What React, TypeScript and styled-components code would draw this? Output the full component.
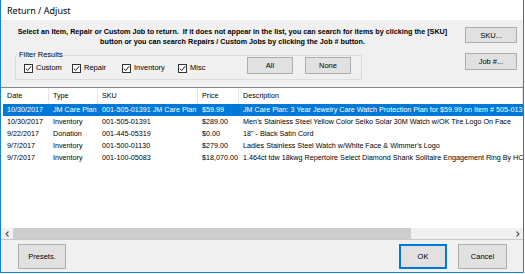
import * as React from 'react'
import styled, { createGlobalStyle } from 'styled-components'

interface IRow {
	date: string
	type: string
	sku: string
	price: string
	desc: string
	selected?: boolean
}

const ROWS: IRow[] = [
	{
		date: '10/30/2017',
		desc: 'JM Care Plan: 3 Year Jewelry Care Watch Protection Plan for $59.99 on Item # 505-01391',
		price: '$59.99',
		selected: true,
		sku: '001-505-01391 JM Care Plan',
		type: 'JM Care Plan',
	},
	{
		date: '10/30/2017',
		desc: "Men's Stainless Steel Yellow Color Seiko Solar 30M Watch w/OK Tire Logo On Face",
		price: '$289.00',
		sku: '001-505-01391',
		type: 'Inventory',
	},
	{
		date: '9/22/2017',
		desc: '18" - Black Satin Cord',
		price: '$0.00',
		sku: '001-445-05319',
		type: 'Donation',
	},
	{
		date: '9/7/2017',
		desc: "Ladies Stainless Steel Watch w/White Face & Wimmer's Logo",
		price: '$279.00',
		sku: '001-500-01130',
		type: 'Inventory',
	},
	{
		date: '9/7/2017',
		desc: '1.464ct tdw 18kwg Repertoire Select Diamond Shank Solitaire Engagement Ring By HC',
		price: '$18,070.00',
		sku: '001-100-05083',
		type: 'Inventory',
	},
]

const COLUMNS = [
	{ key: 'date', label: 'Date', width: 46 },
	{ key: 'type', label: 'Type', width: 49 },
	{ key: 'sku', label: 'SKU', width: 100 },
	{ key: 'price', label: 'Price', width: 41 },
	{ key: 'desc', label: 'Description', width: 0 },
] as const

const FILTERS = [
	{ label: 'Custom', width: 48 },
	{ label: 'Repair', width: 50 },
	{ label: 'Inventory', width: 56 },
	{ label: 'Misc', width: 69 },
]

const GlobalStyle = createGlobalStyle`
	html, body {
		margin: 0;
		padding: 0;
		background: #fff;
	}
	body {
		font-family: 'Liberation Sans', Arial, sans-serif;
		font-size: 7.2px;
		color: #000;
	}
`

const Window = styled.div`
	width: 524px;
	height: 273px;
	box-sizing: border-box;
	border: 1px solid #1883d7;
	border-top: none;
	display: flex;
	flex-direction: column;
	background: #f0f0f0;
`

const TitleBar = styled.div`
	height: 20px;
	flex: none;
	background: #fff;
	display: flex;
	align-items: center;
	padding-left: 6px;
	font-family: 'Noto Sans', 'Open Sans', sans-serif;
	font-size: 9px;
`

const TopPanel = styled.div`
	height: 67px;
	flex: none;
	display: grid;
	grid-template-columns: 463px 52px;
	column-gap: 1px;
`

const LeftPane = styled.div`
	padding-top: 7px;
`

const Instructions = styled.p`
	margin: 0;
	text-align: center;
	font-weight: bold;
	line-height: 10px;
	font-size: 7.2px;
	white-space: nowrap;
`

const Group = styled.fieldset`
	margin: 3px 0 0 14px;
	padding: 0 0 0 2px;
	width: 347px;
	height: 30px;
	box-sizing: border-box;
	border: 1px solid #dcdcdc;
`

const Legend = styled.legend`
	padding: 0 1px;
	line-height: 10px;
	font-size: 7.5px;
`

const FilterRow = styled.div`
	display: flex;
	align-items: flex-start;
	margin-top: -3px;
	padding-left: 6px;
`

const CheckItem = styled.label<{ $width: number }>`
	width: ${p => p.$width}px;
	flex: none;
	display: flex;
	align-items: center;
	gap: 3px;
	margin-top: 6px;
	line-height: 10px;
	font-size: 7.5px;
`

const Box = styled.span`
	width: 9px;
	height: 9px;
	box-sizing: border-box;
	border: 1px solid #333;
	background: #fff;
	display: flex;
	align-items: center;
	justify-content: center;
`

const Button = styled.button<{ $width: number; $height: number; $default?: boolean }>`
	width: ${p => p.$width}px;
	height: ${p => p.$height}px;
	flex: none;
	padding: 0;
	box-sizing: border-box;
	background: #e1e1e1;
	border: 1px solid ${p => (p.$default ? '#0078d7' : '#adadad')};
	box-shadow: ${p => (p.$default ? 'inset 0 0 0 1px #0078d7' : 'none')};
	font-family: 'Liberation Sans', Arial, sans-serif;
	font-size: 7.5px;
	color: #000;
`

const ButtonPair = styled.div`
	display: flex;
	gap: 12px;
`

const RightPane = styled.div`
	padding-top: 7px;
	display: flex;
	flex-direction: column;
	gap: 10px;
`

const ListView = styled.div`
	height: 153px;
	flex: none;
	box-sizing: border-box;
	border-top: 1px solid #828790;
	border-bottom: 1px solid #c8c8c8;
	background: #fff;
	display: flex;
	flex-direction: column;
	overflow: hidden;
`

const HeaderRow = styled.div`
	height: 16px;
	flex: none;
	display: flex;
	padding-left: 2px;
	white-space: nowrap;
`

const HeaderCell = styled.div<{ $width: number }>`
	${p => (p.$width ? `width: ${p.$width}px; flex: none;` : 'flex: 1;')}
	box-sizing: border-box;
	padding-left: 4px;
	line-height: 16px;
	border-right: 1px solid #e5e5e5;
`

const Rows = styled.div`
	flex: 1;
	overflow: hidden;
`

const Row = styled.div<{ $selected?: boolean }>`
	height: 12px;
	display: flex;
	margin-left: 2px;
	white-space: nowrap;
	background: ${p => (p.$selected ? '#0078d7' : 'transparent')};
	color: ${p => (p.$selected ? '#fff' : '#000')};
`

const Cell = styled.div<{ $width: number }>`
	${p => (p.$width ? `width: ${p.$width}px; flex: none;` : 'flex: 1;')}
	box-sizing: border-box;
	padding-left: 4px;
	line-height: 12px;
	overflow: hidden;
`

const ScrollBar = styled.div`
	height: 11px;
	flex: none;
	display: flex;
	background: #f0f0f0;
`

const Arrow = styled.div`
	width: 12px;
	flex: none;
	display: flex;
	align-items: center;
	justify-content: center;
`

const Track = styled.div`
	flex: 1;
	display: flex;
`

const Thumb = styled.div<{ $width: number }>`
	width: ${p => p.$width}px;
	background: #cdcdcd;
`

const Footer = styled.div`
	flex: 1;
	display: flex;
	align-items: flex-start;
	padding: 4px 16px 0 17px;
	gap: 11px;
`

const Spacer = styled.div`
	flex: 1;
`

const Check = () => (
	<Box>
		<svg width='7' height='7' viewBox='0 0 7 7'>
			<path d='M0.8 3.6 L2.7 5.4 L6.2 1.2' fill='none' stroke='#222' strokeWidth='1' />
		</svg>
	</Box>
)

const Chevron = ({ dir }: { dir: 'left' | 'right' }) => (
	<svg width='5' height='6' viewBox='0 0 5 6'>
		<path
			d={dir === 'left' ? 'M3.5 0.5 L1 3 L3.5 5.5' : 'M1.5 0.5 L4 3 L1.5 5.5'}
			fill='none'
			stroke='#555'
			strokeWidth='1.1'
		/>
	</svg>
)

const App = () => (
	<>
		<GlobalStyle />
		<Window>
			<TitleBar>Return / Adjust</TitleBar>
			<TopPanel>
				<LeftPane>
					<Instructions>
						Select an Item, Repair or Custom Job to return.&nbsp; If it does not appear in the list,
						you can search for items by clicking the [SKU]
						<br />
						button or you can search Repairs / Custom Jobs by clicking the Job # button.
					</Instructions>
					<Group>
						<Legend>Filter Results</Legend>
						<FilterRow>
							{FILTERS.map(f => (
								<CheckItem key={f.label} $width={f.width}>
									<Check />
									{f.label}
								</CheckItem>
							))}
							<ButtonPair>
								<Button $width={46} $height={17}>
									All
								</Button>
								<Button $width={46} $height={17}>
									None
								</Button>
							</ButtonPair>
						</FilterRow>
					</Group>
				</LeftPane>
				<RightPane>
					<Button $width={52} $height={16}>
						SKU...
					</Button>
					<Button $width={52} $height={17}>
						Job #...
					</Button>
				</RightPane>
			</TopPanel>
			<ListView>
				<HeaderRow>
					{COLUMNS.map(c => (
						<HeaderCell key={c.key} $width={c.width}>
							{c.label}
						</HeaderCell>
					))}
				</HeaderRow>
				<Rows>
					{ROWS.map((r, i) => (
						<Row key={i} $selected={r.selected}>
							{COLUMNS.map(c => (
								<Cell key={c.key} $width={c.width}>
									{r[c.key]}
								</Cell>
							))}
						</Row>
					))}
				</Rows>
				<ScrollBar>
					<Arrow>
						<Chevron dir='left' />
					</Arrow>
					<Track>
						<Thumb $width={398} />
					</Track>
					<Arrow>
						<Chevron dir='right' />
					</Arrow>
				</ScrollBar>
			</ListView>
			<Footer>
				<Button $width={48} $height={25}>
					Presets.
				</Button>
				<Spacer />
				<Button $width={48} $height={25} $default>
					OK
				</Button>
				<Button $width={49} $height={25}>
					Cancel
				</Button>
			</Footer>
		</Window>
	</>
)

export default App
